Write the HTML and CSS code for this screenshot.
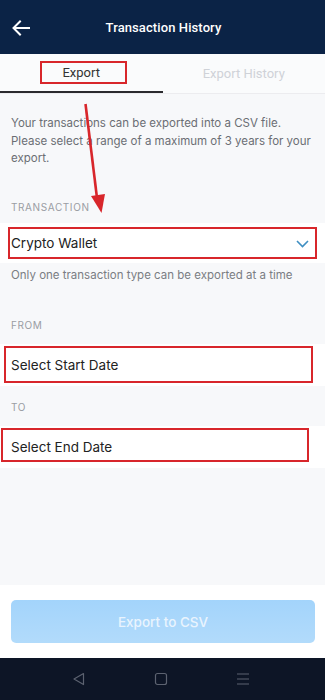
FILE: index.html
```html
<!DOCTYPE html>
<html>
<head>
<meta charset="utf-8">
<link rel="stylesheet" href="styles.css">
</head>
<body>
<div class="app">
  <header class="header">
    <svg class="back" width="18" height="16" viewBox="0 0 18 16"><path d="M17 8H2M8 1.5L1.5 8L8 14.5" fill="none" stroke="#fff" stroke-width="2" stroke-linecap="square"/></svg>
    <div class="title">Transaction History</div>
  </header>
  <nav class="tabs">
    <div class="tab active">Export</div>
    <div class="tab">Export History</div>
  </nav>
  <main class="content">
    <p class="intro">Your transactions can be exported into a CSV file. Please select a range of a maximum of 3 years for your export.</p>
    <div class="label label-first">TRANSACTION</div>
    <div class="field">
      <span>Crypto Wallet</span>
      <svg class="chev" width="13" height="8" viewBox="0 0 13 8"><path d="M1 1l5.5 5.5L12 1" fill="none" stroke="#3f8fc2" stroke-width="1.6"/></svg>
    </div>
    <div class="hint">Only one transaction type can be exported at a time</div>
    <div class="label label-from">FROM</div>
    <div class="field tall"><span>Select Start Date</span></div>
    <div class="label label-to">TO</div>
    <div class="field tall"><span>Select End Date</span></div>
  </main>
  <footer class="footer">
    <button class="btn">Export to CSV</button>
  </footer>
  <div class="navbar">
    <svg width="14" height="14" viewBox="0 0 14 14"><path d="M11.5 1.5L2 7l9.5 5.5z" fill="none" stroke="#5c6270" stroke-width="1.2" stroke-linejoin="round"/></svg>
    <svg width="14" height="14" viewBox="0 0 14 14"><rect x="1.5" y="1.5" width="11" height="11" rx="2" fill="none" stroke="#5c6270" stroke-width="1.2"/></svg>
    <svg width="14" height="14" viewBox="0 0 14 14"><path d="M1 2h12M1 7h12M1 12h12" stroke="#5c6270" stroke-width="1.2"/></svg>
  </div>

  <div class="mark mark-export"></div>
  <div class="mark mark-wallet"></div>
  <div class="mark mark-start"></div>
  <div class="mark mark-end"></div>
  <svg class="arrow" width="325" height="230" viewBox="0 0 325 230">
    <path d="M85.5 104L97 198" stroke="#d8262b" stroke-width="2.6" fill="none"/>
    <path d="M91 196L101.5 213L105 194z" fill="#d8262b"/>
  </svg>
</div>
</body>
</html>
```
FILE: styles.css
```css
* { box-sizing: border-box; }
html, body { margin: 0; padding: 0; }
body { width: 325px; height: 700px; overflow: hidden; font-family: Inter, "Noto Sans", sans-serif; }
.app { position: relative; width: 325px; height: 700px; display: flex; flex-direction: column; background: #f7f8fa; }

.header { height: 54px; background: #0b2346; display: flex; align-items: center; justify-content: center; position: relative; flex: none; }
.back { position: absolute; left: 12px; top: 20px; }
.title { color: #fff; font-family: Roboto, sans-serif; font-weight: 500; font-size: 13px; letter-spacing: 0.1px; margin-left: 2px; }

.tabs { height: 40px; display: flex; background: #fafbfc; border-bottom: 1px solid #ececef; flex: none; }
.tab { flex: 1; display: flex; align-items: center; justify-content: center; font-family: Roboto, sans-serif; font-size: 13px; color: #cfd2d8; }
.tab.active { color: #333; border-bottom: 2px solid #2a2a2e; }

.content { flex: 1; display: flex; flex-direction: column; }
.intro { margin: 0; padding: 21px 11px 0 11px; font-size: 11.5px; line-height: 17.5px; color: #6b6e74; }
.label { font-size: 10px; color: #9a9da3; letter-spacing: 0.6px; padding: 0 11px; line-height: 12px; }
.label-first { margin-top: 33px; }
.label-from { margin-top: 35px; }
.label-to { margin-top: 15px; }
.field { background: #fff; height: 40px; display: flex; align-items: center; justify-content: space-between; padding: 0 16px 0 11px; font-size: 13.5px; color: #222; margin-top: 10px; }
.field.tall { height: 42px; margin-top: 13px; }
.chev { margin-top: 2px; }
.hint { font-size: 11.5px; color: #7a7d83; padding: 4px 11px 0; line-height: 17px; }

.footer { height: 73px; background: #fff; flex: none; padding: 15px 10px 0 11px; }
.btn { width: 100%; height: 43px; border: none; border-radius: 5px; background: linear-gradient(#a3d4fb, #b2dbfb); color: #e9f4fe; font-family: Inter, sans-serif; font-size: 13.5px; font-weight: 500; }

.navbar { height: 42px; background: #0d1526; flex: none; display: flex; align-items: center; justify-content: center; gap: 68px; padding-right: 4px; }

.mark { position: absolute; border: 2px solid #d8262b; }
.mark-export { left: 40px; top: 61px; width: 87px; height: 23px; }
.mark-wallet { left: 8px; top: 227px; width: 309px; height: 32px; }
.mark-start { left: 4px; top: 346px; width: 309px; height: 37px; }
.mark-end { left: 1px; top: 428px; width: 308px; height: 34px; }
.arrow { position: absolute; left: 0; top: 0; }
```
